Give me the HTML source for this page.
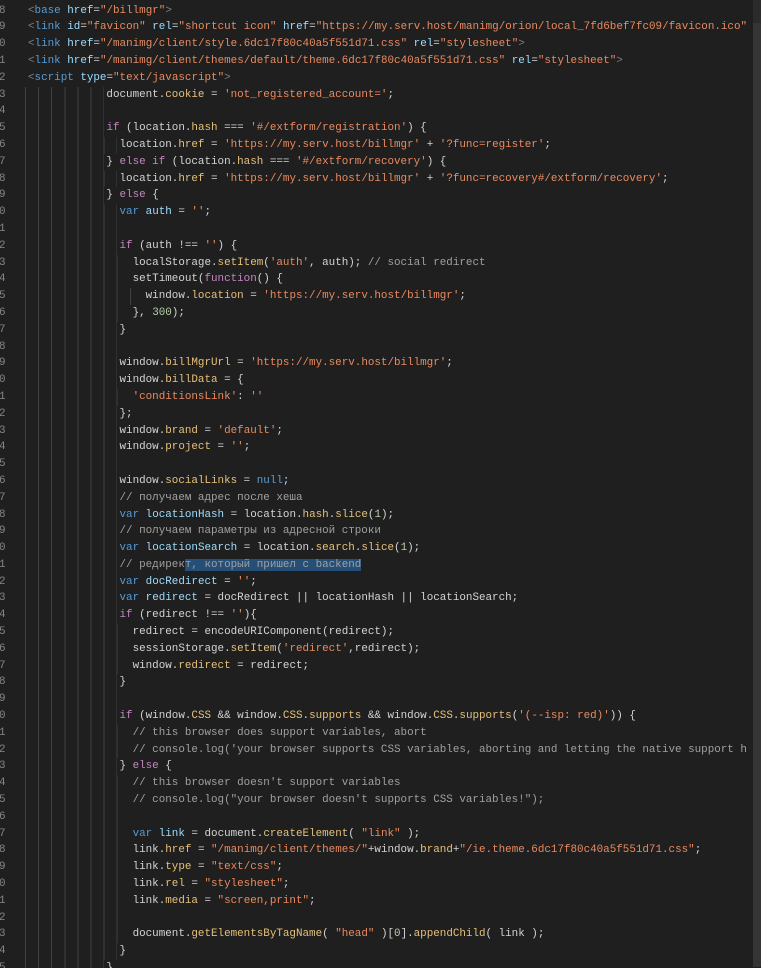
<!DOCTYPE html>
<html><head><meta charset="utf-8">
<style>
html,body{margin:0;padding:0;background:#1f1f1f;width:761px;height:967px;overflow:hidden}
#ed{position:absolute;left:0;top:2.6px;width:753px;height:965px;overflow:hidden;font-family:"Liberation Mono","DejaVu Sans Mono",monospace;font-size:10.9px;line-height:16.8px;color:#d4d4d4}
.l{position:relative;height:16.8px;width:753px;white-space:pre;overflow:hidden}
.ln{position:absolute;left:-1px;top:0;color:#858585}
.cd{position:absolute;left:28px;top:0}
.g{position:absolute;left:-3px;top:0;height:16.8px;background:repeating-linear-gradient(to right,#414141 0 1px,transparent 1px 13.1px)}
.p{color:#808080}.t{color:#569cd6}.a{color:#9cdcfe}.s{color:#ea8a5e}.k{color:#569cd6}.c{color:#c586c0}.y{color:#e5c07b}.v{color:#9cdcfe}.n{color:#b5cea8}.m{color:#a0a0a0}
.sel{background:#264f78}
#sb{position:absolute;left:753px;top:0;width:8px;height:967px;background:#2b2b2b}
#th{position:absolute;left:753px;top:23px;width:8px;height:944px;background:#353535}
</style></head><body>
<div id="ed">
<div class="l"><span class="ln">8</span><span class="cd"><span class="p">&lt;</span><span class="t">base</span> <span class="a">href</span>=<span class="s">"/billmgr"</span><span class="p">&gt;</span></span></div>
<div class="l"><span class="ln">9</span><span class="cd"><span class="p">&lt;</span><span class="t">link</span> <span class="a">id</span>=<span class="s">"favicon"</span> <span class="a">rel</span>=<span class="s">"shortcut icon"</span> <span class="a">href</span>=<span class="s">"https://my.serv.host/manimg/orion/local_7fd6bef7fc09/favicon.ico"</span></span></div>
<div class="l"><span class="ln">0</span><span class="cd"><span class="p">&lt;</span><span class="t">link</span> <span class="a">href</span>=<span class="s">"/manimg/client/style.6dc17f80c40a5f551d71.css"</span> <span class="a">rel</span>=<span class="s">"stylesheet"</span><span class="p">&gt;</span></span></div>
<div class="l"><span class="ln">1</span><span class="cd"><span class="p">&lt;</span><span class="t">link</span> <span class="a">href</span>=<span class="s">"/manimg/client/themes/default/theme.6dc17f80c40a5f551d71.css"</span> <span class="a">rel</span>=<span class="s">"stylesheet"</span><span class="p">&gt;</span></span></div>
<div class="l"><span class="ln">2</span><span class="cd"><span class="p">&lt;</span><span class="t">script</span> <span class="a">type</span>=<span class="s">"text/javascript"</span><span class="p">&gt;</span></span></div>
<div class="l"><span class="ln">3</span><span class="cd"><span class="g" style="width:78.6px"></span>            document.<span class="y">cookie</span> = <span class="s">'not_registered_account='</span>;</span></div>
<div class="l"><span class="ln">4</span><span class="cd"><span class="g" style="width:78.6px"></span></span></div>
<div class="l"><span class="ln">5</span><span class="cd"><span class="g" style="width:78.6px"></span>            <span class="c">if</span> (location.<span class="y">hash</span> === <span class="s">'#/extform/registration'</span>) {</span></div>
<div class="l"><span class="ln">6</span><span class="cd"><span class="g" style="width:91.7px"></span>              location.<span class="y">href</span> = <span class="s">'https://my.serv.host/billmgr'</span> + <span class="s">'?func=register'</span>;</span></div>
<div class="l"><span class="ln">7</span><span class="cd"><span class="g" style="width:78.6px"></span>            } <span class="c">else if</span> (location.<span class="y">hash</span> === <span class="s">'#/extform/recovery'</span>) {</span></div>
<div class="l"><span class="ln">8</span><span class="cd"><span class="g" style="width:91.7px"></span>              location.<span class="y">href</span> = <span class="s">'https://my.serv.host/billmgr'</span> + <span class="s">'?func=recovery#/extform/recovery'</span>;</span></div>
<div class="l"><span class="ln">9</span><span class="cd"><span class="g" style="width:78.6px"></span>            } <span class="c">else</span> {</span></div>
<div class="l"><span class="ln">0</span><span class="cd"><span class="g" style="width:91.7px"></span>              <span class="k">var</span> <span class="v">auth</span> = <span class="s">''</span>;</span></div>
<div class="l"><span class="ln">1</span><span class="cd"><span class="g" style="width:91.7px"></span></span></div>
<div class="l"><span class="ln">2</span><span class="cd"><span class="g" style="width:91.7px"></span>              <span class="c">if</span> (auth !== <span class="s">''</span>) {</span></div>
<div class="l"><span class="ln">3</span><span class="cd"><span class="g" style="width:104.8px"></span>                localStorage.<span class="y">setItem</span>(<span class="s">'auth'</span>, auth); <span class="m">// social redirect</span></span></div>
<div class="l"><span class="ln">4</span><span class="cd"><span class="g" style="width:104.8px"></span>                setTimeout(<span class="c">function</span>() {</span></div>
<div class="l"><span class="ln">5</span><span class="cd"><span class="g" style="width:117.9px"></span>                  window.<span class="y">location</span> = <span class="s">'https://my.serv.host/billmgr'</span>;</span></div>
<div class="l"><span class="ln">6</span><span class="cd"><span class="g" style="width:104.8px"></span>                }, <span class="n">300</span>);</span></div>
<div class="l"><span class="ln">7</span><span class="cd"><span class="g" style="width:91.7px"></span>              }</span></div>
<div class="l"><span class="ln">8</span><span class="cd"><span class="g" style="width:91.7px"></span></span></div>
<div class="l"><span class="ln">9</span><span class="cd"><span class="g" style="width:91.7px"></span>              window.<span class="y">billMgrUrl</span> = <span class="s">'https://my.serv.host/billmgr'</span>;</span></div>
<div class="l"><span class="ln">0</span><span class="cd"><span class="g" style="width:91.7px"></span>              window.<span class="y">billData</span> = {</span></div>
<div class="l"><span class="ln">1</span><span class="cd"><span class="g" style="width:104.8px"></span>                <span class="s">'conditionsLink'</span>: <span class="s">''</span></span></div>
<div class="l"><span class="ln">2</span><span class="cd"><span class="g" style="width:91.7px"></span>              };</span></div>
<div class="l"><span class="ln">3</span><span class="cd"><span class="g" style="width:91.7px"></span>              window.<span class="y">brand</span> = <span class="s">'default'</span>;</span></div>
<div class="l"><span class="ln">4</span><span class="cd"><span class="g" style="width:91.7px"></span>              window.<span class="y">project</span> = <span class="s">''</span>;</span></div>
<div class="l"><span class="ln">5</span><span class="cd"><span class="g" style="width:91.7px"></span></span></div>
<div class="l"><span class="ln">6</span><span class="cd"><span class="g" style="width:91.7px"></span>              window.<span class="y">socialLinks</span> = <span class="k">null</span>;</span></div>
<div class="l"><span class="ln">7</span><span class="cd"><span class="g" style="width:91.7px"></span>              <span class="m">// получаем адрес после хеша</span></span></div>
<div class="l"><span class="ln">8</span><span class="cd"><span class="g" style="width:91.7px"></span>              <span class="k">var</span> <span class="v">locationHash</span> = location.<span class="y">hash</span>.<span class="y">slice</span>(<span class="n">1</span>);</span></div>
<div class="l"><span class="ln">9</span><span class="cd"><span class="g" style="width:91.7px"></span>              <span class="m">// получаем параметры из адресной строки</span></span></div>
<div class="l"><span class="ln">0</span><span class="cd"><span class="g" style="width:91.7px"></span>              <span class="k">var</span> <span class="v">locationSearch</span> = location.<span class="y">search</span>.<span class="y">slice</span>(<span class="n">1</span>);</span></div>
<div class="l"><span class="ln">1</span><span class="cd"><span class="g" style="width:91.7px"></span>              <span class="m">// редирек<span class="sel">т, который пришел с backend</span></span></span></div>
<div class="l"><span class="ln">2</span><span class="cd"><span class="g" style="width:91.7px"></span>              <span class="k">var</span> <span class="v">docRedirect</span> = <span class="s">''</span>;</span></div>
<div class="l"><span class="ln">3</span><span class="cd"><span class="g" style="width:91.7px"></span>              <span class="k">var</span> <span class="v">redirect</span> = docRedirect || locationHash || locationSearch;</span></div>
<div class="l"><span class="ln">4</span><span class="cd"><span class="g" style="width:91.7px"></span>              <span class="c">if</span> (redirect !== <span class="s">''</span>){</span></div>
<div class="l"><span class="ln">5</span><span class="cd"><span class="g" style="width:104.8px"></span>                redirect = encodeURIComponent(redirect);</span></div>
<div class="l"><span class="ln">6</span><span class="cd"><span class="g" style="width:104.8px"></span>                sessionStorage.<span class="y">setItem</span>(<span class="s">'redirect'</span>,redirect);</span></div>
<div class="l"><span class="ln">7</span><span class="cd"><span class="g" style="width:104.8px"></span>                window.<span class="y">redirect</span> = redirect;</span></div>
<div class="l"><span class="ln">8</span><span class="cd"><span class="g" style="width:91.7px"></span>              }</span></div>
<div class="l"><span class="ln">9</span><span class="cd"><span class="g" style="width:91.7px"></span></span></div>
<div class="l"><span class="ln">0</span><span class="cd"><span class="g" style="width:91.7px"></span>              <span class="c">if</span> (window.<span class="y">CSS</span> &amp;&amp; window.<span class="y">CSS</span>.<span class="y">supports</span> &amp;&amp; window.<span class="y">CSS</span>.<span class="y">supports</span>(<span class="s">'(--isp: red)'</span>)) {</span></div>
<div class="l"><span class="ln">1</span><span class="cd"><span class="g" style="width:104.8px"></span>                <span class="m">// this browser does support variables, abort</span></span></div>
<div class="l"><span class="ln">2</span><span class="cd"><span class="g" style="width:104.8px"></span>                <span class="m">// console.log('your browser supports CSS variables, aborting and letting the native support h</span></span></div>
<div class="l"><span class="ln">3</span><span class="cd"><span class="g" style="width:91.7px"></span>              } <span class="c">else</span> {</span></div>
<div class="l"><span class="ln">4</span><span class="cd"><span class="g" style="width:104.8px"></span>                <span class="m">// this browser doesn't support variables</span></span></div>
<div class="l"><span class="ln">5</span><span class="cd"><span class="g" style="width:104.8px"></span>                <span class="m">// console.log("your browser doesn't supports CSS variables!");</span></span></div>
<div class="l"><span class="ln">6</span><span class="cd"><span class="g" style="width:104.8px"></span></span></div>
<div class="l"><span class="ln">7</span><span class="cd"><span class="g" style="width:104.8px"></span>                <span class="k">var</span> <span class="v">link</span> = document.<span class="y">createElement</span>( <span class="s">"link"</span> );</span></div>
<div class="l"><span class="ln">8</span><span class="cd"><span class="g" style="width:104.8px"></span>                link.<span class="y">href</span> = <span class="s">"/manimg/client/themes/"</span>+window.<span class="y">brand</span>+<span class="s">"/ie.theme.6dc17f80c40a5f551d71.css"</span>;</span></div>
<div class="l"><span class="ln">9</span><span class="cd"><span class="g" style="width:104.8px"></span>                link.<span class="y">type</span> = <span class="s">"text/css"</span>;</span></div>
<div class="l"><span class="ln">0</span><span class="cd"><span class="g" style="width:104.8px"></span>                link.<span class="y">rel</span> = <span class="s">"stylesheet"</span>;</span></div>
<div class="l"><span class="ln">1</span><span class="cd"><span class="g" style="width:104.8px"></span>                link.<span class="y">media</span> = <span class="s">"screen,print"</span>;</span></div>
<div class="l"><span class="ln">2</span><span class="cd"><span class="g" style="width:104.8px"></span></span></div>
<div class="l"><span class="ln">3</span><span class="cd"><span class="g" style="width:104.8px"></span>                document.<span class="y">getElementsByTagName</span>( <span class="s">"head"</span> )[<span class="n">0</span>].<span class="y">appendChild</span>( link );</span></div>
<div class="l"><span class="ln">4</span><span class="cd"><span class="g" style="width:91.7px"></span>              }</span></div>
<div class="l"><span class="ln">5</span><span class="cd"><span class="g" style="width:78.6px"></span>            }</span></div>
</div>
<div id="sb"></div><div id="th"></div>
</body></html>
